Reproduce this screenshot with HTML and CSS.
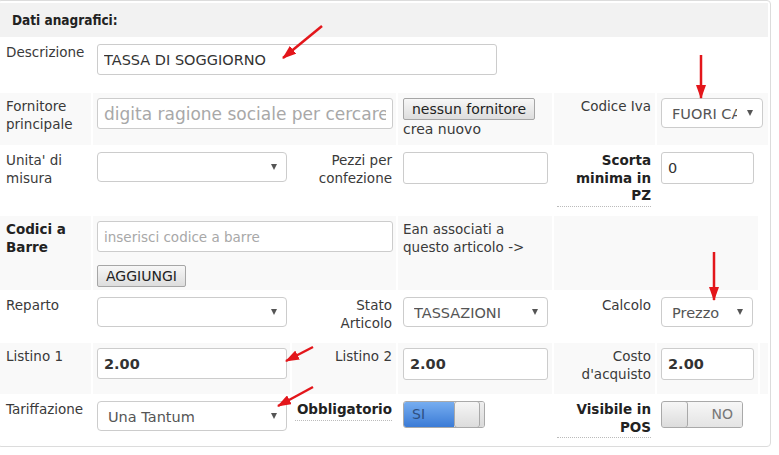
FILE: index.html
```html
<!DOCTYPE html>
<html>
<head>
    <title>Dati anagrafici</title>
    <link rel="stylesheet" href="styles.css">
</head>
<body>
    <div class="panel">
        <div class="panel-heading">Dati anagrafici:</div>
        <table class="form-table">
            <colgroup>
                <col class="c-label">
                <col class="c-field">
                <col class="c-label2">
                <col class="c-field2">
                <col class="c-label3">
                <col class="c-field3">
                <col class="c-end">
            </colgroup>
            <tr class="h-desc">
                <td class="lbl">Descrizione</td>
                <td colspan="3"><input class="field field-desc" value="TASSA DI SOGGIORNO"></td>
                <td colspan="3"></td>
            </tr>
            <tr class="striped h-supplier">
                <td class="lbl">Fornitore principale</td>
                <td colspan="2"><input class="field field-search" placeholder="digita ragione sociale per cercare"></td>
                <td class="cell-mid">
                    <button class="btn">nessun fornitore</button>
                    <div class="new-link">crea nuovo</div>
                </td>
                <td class="lbl-r">Codice Iva</td>
                <td colspan="2">
                    <span class="select-wrap sel-iva"><select><option>FUORI CAMPO IVA</option></select></span>
                </td>
            </tr>
            <tr class="h-unit">
                <td class="lbl">Unita' di misura</td>
                <td><span class="select-wrap sel-main"><select><option></option></select></span></td>
                <td class="lbl-r">Pezzi per confezione</td>
                <td class="cell-mid"><input class="field field-mid"></td>
                <td class="lbl-r"><span class="hint">Scorta minima in PZ</span></td>
                <td colspan="2"><input class="field field-small" value="0"></td>
            </tr>
            <tr class="striped h-barcode">
                <td class="lbl lbl-bold">Codici a Barre</td>
                <td colspan="2">
                    <input class="field field-search field-barcode" placeholder="inserisci codice a barre">
                    <button class="btn btn-add">AGGIUNGI</button>
                </td>
                <td class="cell-mid">Ean associati a questo articolo -&gt;</td>
                <td colspan="2"></td>
            </tr>
            <tr class="h-dept">
                <td class="lbl">Reparto</td>
                <td><span class="select-wrap sel-main"><select><option></option></select></span></td>
                <td class="lbl-r">Stato<br>Articolo</td>
                <td class="cell-mid"><span class="select-wrap sel-mid"><select><option>TASSAZIONI</option></select></span></td>
                <td class="lbl-r">Calcolo</td>
                <td><span class="select-wrap sel-small"><select><option>Prezzo</option></select></span></td>
                <td></td>
            </tr>
            <tr class="striped h-price">
                <td class="lbl">Listino 1</td>
                <td><input class="field field-main field-bold" value="2.00"></td>
                <td class="lbl-r">Listino 2</td>
                <td class="cell-mid"><input class="field field-mid field-bold" value="2.00"></td>
                <td class="lbl-r">Costo d'acquisto</td>
                <td><input class="field field-small field-bold" value="2.00"></td>
                <td></td>
            </tr>
            <tr class="h-tariff">
                <td class="lbl">Tariffazione</td>
                <td><span class="select-wrap sel-main"><select><option>Una Tantum</option></select></span></td>
                <td class="lbl-r"><span class="hint">Obbligatorio</span></td>
                <td class="cell-mid">
                    <span class="switch switch-on"><span class="switch-text">SI</span><span class="switch-handle"></span><span class="switch-rest"></span></span>
                </td>
                <td class="lbl-r"><span class="hint">Visibile in POS</span></td>
                <td>
                    <span class="switch switch-off"><span class="switch-handle"></span><span class="switch-text">NO</span></span>
                </td>
                <td></td>
            </tr>
        </table>
    </div>

    <svg class="annotations" width="779" height="455" viewBox="0 0 779 455">
        <defs>
            <marker id="head" markerWidth="14" markerHeight="10" refX="13" refY="5" orient="auto" markerUnits="userSpaceOnUse">
                <path d="M0,0 L14,5 L0,10 z" fill="#e3161b"/>
            </marker>
        </defs>
        <g stroke="#e3161b" stroke-width="2.5" marker-end="url(#head)">
            <line x1="322" y1="26" x2="283" y2="58"/>
            <line x1="701" y1="55" x2="701" y2="98"/>
            <line x1="714" y1="252" x2="714" y2="300"/>
            <line x1="313" y1="347" x2="286" y2="361"/>
            <line x1="313" y1="387" x2="278" y2="406"/>
        </g>
    </svg>
</body>
</html>
```

FILE: styles.css
```css
body {
    margin: 0;
    font-family: "DejaVu Sans", Verdana, sans-serif;
    font-size: 13.5px;
    color: #3a3a3a;
    background: #fff;
}

.panel {
    margin-left: -3px;
    width: 772px;
    border: 1px solid #dcdcdc;
    border-radius: 4px;
}

.panel-heading {
    margin: 2px 2px 0;
    height: 34px;
    line-height: 34px;
    padding-left: 12px;
    background: #f2f2f2;
    font-family: "DejaVu Sans Condensed", "DejaVu Sans", sans-serif;
    font-weight: bold;
    color: #222;
}

.form-table {
    width: 772px;
    border-spacing: 2px;
    table-layout: fixed;
}

.c-label { width: 91px; }
.c-field { width: 197px; }
.c-label2 { width: 104px; }
.c-field2 { width: 154px; }
.c-label3 { width: 101px; }
.c-field3 { width: 101px; }
.c-end { width: 8px; }

.form-table td {
    padding: 5px 4px 0 4px;
    vertical-align: top;
    line-height: 17.5px;
}

.striped td {
    background: #f9f9f9;
}

.h-desc { height: 52px; }
.h-supplier { height: 52px; }
.h-unit { height: 67px; }
.h-barcode { height: 74px; }
.h-dept { height: 49px; }
.h-price { height: 51px; }
.h-tariff { height: 48px; }

.form-table td.lbl {
    padding-left: 6px;
}

.lbl-bold {
    font-weight: bold;
    color: #222;
}

.form-table td.lbl-r {
    text-align: right;
    padding-left: 3px;
}

.form-table td.cell-mid {
    padding-left: 5px;
}

.hint {
    display: block;
    font-weight: bold;
    color: #222;
    padding-bottom: 1px;
    border-bottom: 1px dotted #bbb;
}

.field {
    box-sizing: border-box;
    height: 31px;
    border: 1px solid #ccc;
    border-radius: 3px;
    padding: 0 6px;
    font-family: "DejaVu Sans", Verdana, sans-serif;
    font-size: 14.5px;
    color: #333;
    background: #fff;
}

.field::placeholder {
    color: #a8a8a8;
}

.field-desc { width: 400px; }
.field-search { width: 296px; font-size: 17px; }
.field-barcode { font-size: 13.5px; display: block; }
.field-main { width: 190px; }
.field-mid { width: 145px; height: 32px; }
.field-small { width: 93px; height: 32px; }
.field-bold { font-weight: bold; }

.btn {
    height: 22px;
    padding: 0 8px;
    border: 1px solid #a6a6a6;
    border-radius: 2px;
    background: linear-gradient(#f7f7f7, #dddddd);
    font-family: "DejaVu Sans", Verdana, sans-serif;
    font-size: 14px;
    color: #222;
}

.new-link {
    font-size: 14px;
    line-height: 18px;
}

.btn-add {
    margin-top: 13px;
}

.select-wrap {
    position: relative;
    display: inline-block;
}

.select-wrap::after {
    content: "";
    position: absolute;
    right: 10px;
    top: 12px;
    border-left: 3px solid transparent;
    border-right: 3px solid transparent;
    border-top: 6px solid #555;
}

.select-wrap select {
    appearance: none;
    -webkit-appearance: none;
    box-sizing: border-box;
    width: 100%;
    height: 30px;
    border: 1px solid #ccc;
    border-radius: 4px;
    padding: 2px 25px 0 10px;
    background: #fff;
    font-family: "DejaVu Sans", Verdana, sans-serif;
    font-size: 14.5px;
    color: #555;
}

.sel-main { width: 190px; }
.sel-mid { width: 145px; }
.sel-small { width: 92px; }
.sel-iva { width: 102px; }

.switch {
    box-sizing: border-box;
    display: flex;
    width: 82px;
    height: 27px;
    border: 1px solid #a9a9a9;
    border-radius: 3px;
    overflow: hidden;
    font-size: 14px;
    line-height: 25px;
}

.switch-on .switch-text {
    width: 50px;
    padding-left: 8px;
    box-sizing: border-box;
    background: linear-gradient(#76adf0, #3b7bd6);
    color: #2e4f80;
}

.switch-handle {
    box-sizing: border-box;
    width: 26px;
    border: 1px solid #a9a9a9;
    border-radius: 3px;
    background: linear-gradient(#f6f6f6, #dcdcdc);
}

.switch-on .switch-handle {
    margin-top: -1px;
    height: 27px;
}

.switch-rest {
    flex: 1;
    background: linear-gradient(#efefef, #dadada);
}

.switch-off .switch-handle {
    width: 27px;
    margin: -1px 0 0 -1px;
    height: 27px;
}

.switch-off .switch-text {
    flex: 1;
    text-align: right;
    padding-right: 9px;
    background: linear-gradient(#f7f7f7, #e4e4e4);
    color: #777;
}

.annotations {
    position: absolute;
    left: 0;
    top: 0;
    pointer-events: none;
}
```
